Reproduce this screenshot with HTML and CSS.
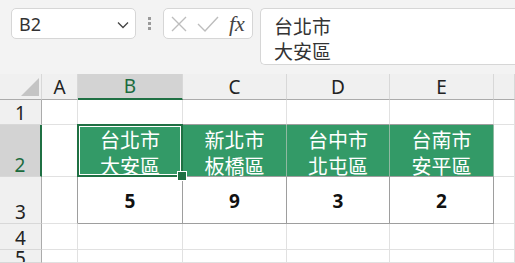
FILE: index.html
```html
<!DOCTYPE html>
<html lang="zh-Hant">
<head>
    <meta charset="UTF-8">
    <title>Sheet</title>
    <link rel="stylesheet" href="styles.css">
</head>
<body>
    <div class="toolbar">
        <div class="name-box">
            <span>B2</span>
            <svg class="chevron" width="12" height="8" viewBox="0 0 12 8"><path d="M1 1.5 L6 6.5 L11 1.5" fill="none" stroke="#444" stroke-width="1.3"/></svg>
        </div>
        <div class="dots"><i></i><i></i><i></i></div>
        <div class="fx-box">
            <svg width="18" height="18" viewBox="0 0 18 18"><path d="M2 2 L16 16 M16 2 L2 16" stroke="#bdbdbd" stroke-width="1.4" fill="none"/></svg>
            <svg width="22" height="18" viewBox="0 0 22 18"><path d="M1 9 L8 16 L21 2" stroke="#bdbdbd" stroke-width="1.4" fill="none"/></svg>
            <span class="fx">fx</span>
        </div>
        <div class="formula"><div>台北市</div><div>大安區</div></div>
    </div>

    <div class="sheet">
        <div class="hd corner"><svg width="18" height="18" viewBox="0 0 18 18"><path d="M18 0 L18 18 L0 18 Z" fill="#c4c4c4"/></svg></div>
        <div class="hd col">A</div>
        <div class="hd col active">B</div>
        <div class="hd col">C</div>
        <div class="hd col">D</div>
        <div class="hd col">E</div>
        <div class="hd col"></div>

        <div class="hd row">1</div>
        <div class="cell"></div>
        <div class="cell top"></div>
        <div class="cell top"></div>
        <div class="cell top"></div>
        <div class="cell top"></div>
        <div class="cell"></div>

        <div class="hd row active">2</div>
        <div class="cell edge"></div>
        <div class="cell green selected"><div>台北市</div><div>大安區</div></div>
        <div class="cell green"><div>新北市</div><div>板橋區</div></div>
        <div class="cell green"><div>台中市</div><div>北屯區</div></div>
        <div class="cell green"><div>台南市</div><div>安平區</div></div>
        <div class="cell"></div>

        <div class="hd row">3</div>
        <div class="cell edge"></div>
        <div class="cell num">5</div>
        <div class="cell num">9</div>
        <div class="cell num">3</div>
        <div class="cell num">2</div>
        <div class="cell"></div>

        <div class="hd row">4</div>
        <div class="cell"></div>
        <div class="cell"></div>
        <div class="cell"></div>
        <div class="cell"></div>
        <div class="cell"></div>
        <div class="cell"></div>

        <div class="hd row last">5</div>
        <div class="cell"></div>
        <div class="cell"></div>
        <div class="cell"></div>
        <div class="cell"></div>
        <div class="cell"></div>
        <div class="cell"></div>
    </div>
</body>
</html>
```

FILE: styles.css
```css
* {
    margin: 0;
    padding: 0;
    box-sizing: border-box;
}
body {
    width: 515px;
    height: 263px;
    overflow: hidden;
    background: #f3f3f3;
    font-family: "Noto Sans", "Noto Sans CJK TC", sans-serif;
    color: #222;
}
.toolbar {
    height: 74px;
    display: flex;
    align-items: flex-start;
    padding: 8px 0 0 11px;
}
.toolbar > * {
    flex-shrink: 0;
}
.name-box {
    width: 125px;
    height: 31px;
    background: #fff;
    border: 1px solid #d6d6d6;
    border-radius: 5px;
    display: flex;
    align-items: center;
    justify-content: space-between;
    padding: 0 6px 0 7px;
    font-size: 18px;
    color: #333;
}
.chevron {
    margin-top: 2px;
}
.dots {
    width: 27px;
    height: 31px;
    display: flex;
    flex-direction: column;
    align-items: center;
    justify-content: center;
    gap: 2px;
}
.dots i {
    width: 3px;
    height: 3px;
    background: #9a9a9a;
}
.fx-box {
    width: 90px;
    height: 31px;
    background: #fff;
    border: 1px solid #d6d6d6;
    border-radius: 5px;
    display: flex;
    align-items: center;
    gap: 9px;
    padding-left: 6px;
}
.fx {
    font-family: "Liberation Serif", serif;
    font-style: italic;
    font-size: 22px;
    color: #444;
    margin-left: 1px;
}
.formula {
    margin-left: 7px;
    flex: 1;
    flex-shrink: 1;
    height: 57px;
    background: #fff;
    border: 1px solid #d6d6d6;
    border-right: none;
    border-radius: 5px 0 0 5px;
    padding: 4px 0 0 13px;
    font-family: "Noto Sans CJK TC", sans-serif;
    font-size: 19px;
    line-height: 25px;
    color: #333;
}
.formula div {
    height: 25px;
}
.sheet {
    display: grid;
    grid-template-columns: 42px 36px 105px 104px 103px 104px 1fr;
    grid-template-rows: 26px 25px 52px 47px 26px 1fr;
    background: #fff;
    height: 189px;
}
.hd {
    background: #f0f0f0;
    font-size: 19px;
    color: #222;
    display: flex;
    justify-content: center;
}
.col {
    align-items: center;
    border-right: 1px solid #d8d8d8;
    border-bottom: 1px solid #ababab;
}
.row {
    align-items: flex-end;
    line-height: 22px;
    border-right: 1px solid #ababab;
    border-bottom: 1px solid #d8d8d8;
}
.row.last {
    align-items: flex-start;
    line-height: 16px;
    overflow: hidden;
}
.corner {
    align-items: flex-end;
    justify-content: flex-end;
    padding: 0 2px 3px 0;
    border-right: 1px solid #d8d8d8;
    border-bottom: 1px solid #ababab;
}
.hd.active {
    background: #d3d3d3;
    color: #1b6b3e;
}
.col.active {
    border-bottom: 2px solid #1f7043;
}
.row.active {
    border-right: 2px solid #1f7043;
}
.cell {
    border-right: 1px solid #e1e1e1;
    border-bottom: 1px solid #e1e1e1;
    display: flex;
    align-items: center;
    justify-content: center;
    text-align: center;
}
.cell.top {
    border-bottom-color: #9e9e9e;
}
.cell.edge {
    border-right-color: #9e9e9e;
}
.green {
    flex-direction: column;
    background: #339a67;
    color: #fff;
    font-family: "Noto Sans CJK TC", sans-serif;
    font-size: 20px;
    line-height: 26px;
    padding-top: 4px;
    border-right-color: #8fb9a1;
    border-bottom-color: #9e9e9e;
}
.green div {
    height: 26px;
}
.num {
    font-weight: bold;
    font-size: 19px;
    color: #111;
    border-right-color: #9e9e9e;
    border-bottom-color: #9e9e9e;
    padding-top: 2px;
}
.selected {
    position: relative;
}
.selected::after {
    content: "";
    position: absolute;
    left: -1px;
    top: -1px;
    right: -1px;
    bottom: -1px;
    border: 2px solid #1f7043;
    box-shadow: inset 0 0 0 1px #fff;
}
.selected::before {
    content: "";
    position: absolute;
    right: -5px;
    bottom: -5px;
    width: 8px;
    height: 8px;
    background: #1f7043;
    border: 1px solid #fff;
    z-index: 2;
}
```
